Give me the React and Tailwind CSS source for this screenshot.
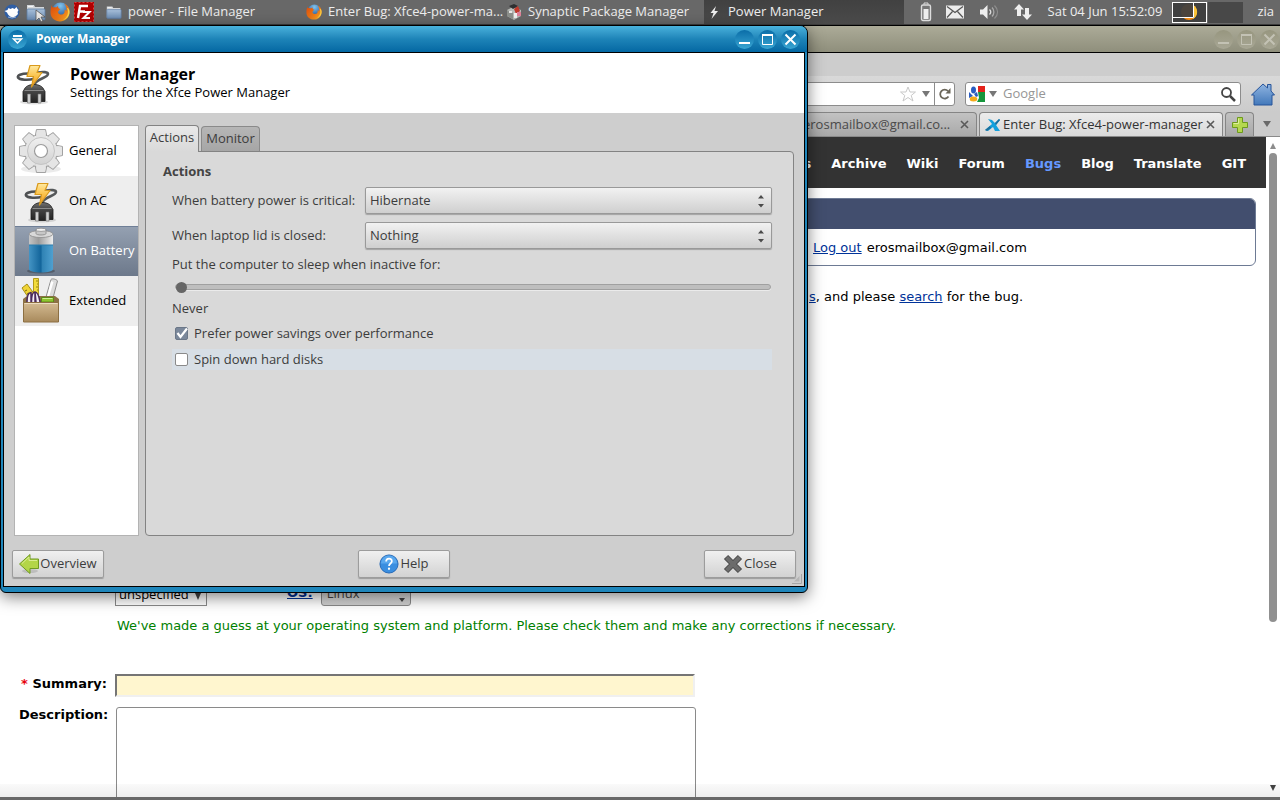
import { useState } from 'react';

const NAV_ITEMS = ['s', 'Archive', 'Wiki', 'Forum', 'Bugs', 'Blog', 'Translate', 'GIT'];

function XfceIcon() {
  return (
    <svg width="16" height="18" viewBox="0 0 16 18">
      <circle cx="8" cy="9" r="7.5" fill="#2f5fa6" />
      <path d="M.5 8l3-1 1-2 2 1 2-1 2 1 2-2 1 2 1 1-1 2 .5 2-2 2-3 1.500-3-1-2-2-1-2z" fill="#fff" />
      <path d="M4 14l4 1 4-1" stroke="#9db8dd" fill="none" />
    </svg>
  );
}

function FolderIcon({ size, cursor }) {
  return (
    <svg width={size} height={size} viewBox="0 0 20 20">
      <defs>
        <linearGradient id="folder" x1="0" y1="0" x2="0" y2="1">
          <stop offset="0" stopColor="#a9c0da" />
          <stop offset="1" stopColor="#6c8db4" />
        </linearGradient>
      </defs>
      <path d="M1 3h7l1 2h9v12H1z" fill="#d3d7db" />
      <path d="M2 4h5v1H2z" fill="#f5f5f5" />
      <rect x="1" y="7" width="18" height="11" rx="1" fill="url(#folder)" stroke="#5d7da5" strokeWidth="0.8" />
      {cursor && <path d="M10 8v11l3-3 2 4 2-1-2-4h4z" fill="#e8e8e8" stroke="#555" strokeWidth="0.8" />}
    </svg>
  );
}

function FirefoxIcon({ size }) {
  return (
    <svg width={size} height={size} viewBox="0 0 20 20" className="shrink-0">
      <defs>
        <radialGradient id="globe" cx="0.5" cy="0.2" r="0.8">
          <stop offset="0" stopColor="#7fc4ee" />
          <stop offset="1" stopColor="#173f86" />
        </radialGradient>
        <linearGradient id="fox" x1="0" y1="0" x2="1" y2="1">
          <stop offset="0" stopColor="#d9480c" />
          <stop offset="0.6" stopColor="#ee7b16" />
          <stop offset="1" stopColor="#f9b52a" />
        </linearGradient>
      </defs>
      <circle cx="10.500" cy="9" r="8.500" fill="url(#globe)" />
      <path d="M2 3c0 1 0 2 .5 2.500C3.500 5 5 5 6 5.500L8 4c0 2 1 3 2.500 3L8.500 9c-1 1 0 3.500 2.500 3.500 3 0 4-2 3.500-5 1 .5 1.500 1 1.800 2C17 6 16 3 14 1.500c4 1.500 6 5 5.500 9C19 16 15 19.500 10 19.500S.5 16 .5 10.500C.5 7 1 5 2 3z" fill="url(#fox)" />
      <path d="M17 6c2 4 1 9-4 12 4-1 6.500-4 6.500-8 0-2-1-4-2.500-4z" fill="#fbd044" />
    </svg>
  );
}

function FileZillaIcon() {
  return (
    <svg width="20" height="20" viewBox="0 0 20 20">
      <rect width="20" height="20" fill="#b00000" />
      <rect x="0.5" y="0.5" width="19" height="19" fill="none" stroke="#e04040" strokeDasharray="2 2" />
      <path d="M4 16L6 4h8M5 9.500h6" stroke="#fff" strokeWidth="2.400" fill="none" />
      <path d="M9 10h6.500l-6 6H16" stroke="#fff" strokeWidth="2" fill="none" />
    </svg>
  );
}

function SynapticIcon() {
  return (
    <svg width="16" height="16" viewBox="0 0 16 16" className="shrink-0">
      <path d="M1 6l6-3 8 3v6l-7 4-7-4z" fill="#b9bcb8" />
      <path d="M1 6l6 3v6l-6-3z" fill="#8d908c" />
      <path d="M3 2l5-2 4 2-5 3z" fill="#2d2f30" />
      <path d="M8 5l4-3 2 5-4 3z" fill="#c23a2c" />
      <path d="M11 8h4v4h-4z" fill="#e0829a" />
      <path d="M8 9h3v5H8z" fill="#f2f2f2" />
      <path d="M3 7h3v2H3z" fill="#e8e8e8" />
    </svg>
  );
}

function PlugIcon() {
  return (
    <svg width="40" height="44" viewBox="0 0 40 44">
      <defs>
        <linearGradient id="bolt" x1="0" y1="0" x2="0" y2="1">
          <stop offset="0" stopColor="#ffe9a0" />
          <stop offset="0.5" stopColor="#fbc24a" />
          <stop offset="1" stopColor="#ee9324" />
        </linearGradient>
        <linearGradient id="plug" x1="0" y1="0" x2="0" y2="1">
          <stop offset="0" stopColor="#707070" />
          <stop offset="0.350" stopColor="#474747" />
          <stop offset="1" stopColor="#222222" />
        </linearGradient>
      </defs>
      <ellipse cx="21" cy="41" rx="14" ry="2.500" fill="#000" opacity="0.120" />
      <path d="M15 12.500C8 12.500 4 14.500 5 16.500c1.500 2.500 10 3 17 1" fill="none" stroke="#4e5052" strokeWidth="2.600" />
      <path d="M25 11.500c5-1 10-.5 10 1.500 0 4-12 4.500-14 11" fill="none" stroke="#55585a" strokeWidth="2.600" />
      <path d="M11 29c1-3.500 5-5.500 10-5.500s9 2 10 5.500l1 1.500v10h-4l-2 1H16l-2-1h-4v-10z" fill="url(#plug)" stroke="#1c1c1c" strokeWidth="0.800" />
      <path d="M11.500 29.500h19" stroke="#8a8a8a" />
      <path d="M14.500 33h3v9h-3zM25 33h3v9h-3z" fill="#cfd0d0" stroke="#777" strokeWidth="0.600" />
      <path d="M17 4.500h10l-3 7h5L18.500 26l2-10.500H14z" fill="url(#bolt)" stroke="#d99a1c" strokeWidth="1.200" strokeLinejoin="round" />
    </svg>
  );
}

function GearIcon() {
  const teeth = [0, 45, 90, 135, 180, 225, 270, 315];
  return (
    <svg width="48" height="48" viewBox="0 0 48 48">
      <defs>
        <linearGradient id="gear" x1="0" y1="0" x2="0" y2="1">
          <stop offset="0" stopColor="#f0f0f0" />
          <stop offset="1" stopColor="#d2d2d2" />
        </linearGradient>
      </defs>
      <ellipse cx="24" cy="42" rx="20" ry="4" fill="#000" opacity="0.080" />
      <g fill="#e3e3e3" stroke="#a2a2a2" strokeLinejoin="round">
        {teeth.map(angle => (
          <path key={angle} d="M18 10l1.500-7.500h9L30 10z" transform={`rotate(${angle} 24 24)`} />
        ))}
      </g>
      <circle cx="24" cy="24" r="16.500" fill="url(#gear)" stroke="#a2a2a2" />
      <g fill="#e5e5e5">
        {teeth.map(angle => (
          <path key={angle} d="M18.700 11l1.400-8h7.800l1.400 8z" transform={`rotate(${angle} 24 24)`} />
        ))}
      </g>
      <circle cx="24" cy="24" r="13.500" fill="url(#gear)" stroke="#c4c4c4" />
      <circle cx="24" cy="24" r="6.500" fill="#fff" stroke="#9b9b9b" strokeWidth="1.200" />
    </svg>
  );
}

function BatteryIcon() {
  return (
    <svg width="48" height="48" viewBox="0 0 48 48">
      <defs>
        <linearGradient id="cell">
          <stop offset="0" stopColor="#4494c4" />
          <stop offset="0.500" stopColor="#12649a" />
          <stop offset="0.550" stopColor="#2f82b4" />
          <stop offset="1" stopColor="#4fa0d0" />
        </linearGradient>
        <linearGradient id="metal">
          <stop offset="0" stopColor="#c5c5c5" />
          <stop offset="0.400" stopColor="#9c9c9c" />
          <stop offset="1" stopColor="#ededed" />
        </linearGradient>
      </defs>
      <ellipse cx="24" cy="44" rx="14" ry="2.500" fill="#000" opacity="0.250" />
      <path d="M12 8v34c0 2 5 3.500 12 3.500S36 44 36 42V8z" fill="url(#cell)" />
      <path d="M12 7v11h24V7z" fill="url(#metal)" />
      <path d="M12 18h24" stroke="#2d7dac" />
      <ellipse cx="24" cy="7" rx="12" ry="3.500" fill="#d9d9d9" stroke="#8d8d8d" strokeWidth="0.800" />
      <path d="M19 2.500v4c0 2 10 2 10 0v-4z" fill="#c7c7c7" stroke="#858585" strokeWidth="0.800" />
      <ellipse cx="24" cy="2.800" rx="5" ry="1.600" fill="#f2f2f2" stroke="#8d8d8d" strokeWidth="0.800" />
    </svg>
  );
}

function ToolboxIcon() {
  return (
    <svg width="48" height="48" viewBox="0 0 48 48">
      <defs>
        <linearGradient id="box" x1="0" y1="0" x2="0" y2="1">
          <stop offset="0" stopColor="#d4bb92" />
          <stop offset="1" stopColor="#a88a5c" />
        </linearGradient>
      </defs>
      <path d="M5 11l5-4 8 11-5 5z" fill="#f0d436" stroke="#a88f14" />
      <path d="M8 14l2-1M10 17l2-1" stroke="#7d6b0f" />
      <path d="M16.500 1.500h5v20h-5z" fill="#f2dc3c" stroke="#b39a1c" />
      <path d="M19 4h2M20 7h1M19 10h2M20 13h1" stroke="#7d6b0f" strokeWidth="0.800" />
      <path d="M34 2.500c1-1.500 6 0 6.500 1.500L36 21l-7-1z" fill="#dcdcdc" stroke="#8d8d8d" />
      <path d="M34 4l2.500 1L32 20l-2-.5z" fill="#fff" />
      <path d="M6 22l4-3h28l4 3v4H6z" fill="#8c7146" />
      <path d="M10 25c0-7 2-9.500 4-9.500V25M14.500 25c0-7 1-10 3.500-10v10M19 25l-1-10c3 0 4 4 5 10" fill="#f5eef8" stroke="#4b2a5b" strokeWidth="1.500" />
      <path d="M24.500 20.500h12V25h-12z" fill="#8fc52f" stroke="#5c8a17" />
      <path d="M25.500 21.500h10" stroke="#d0ef90" />
      <path d="M6.500 25.500h35v19.500h-35z" fill="url(#box)" stroke="#8c6f42" />
      <path d="M7.500 26.500h33" stroke="#ecdcc0" />
    </svg>
  );
}

function BoltIcon() {
  return (
    <svg width="16" height="16" viewBox="0 0 16 16" className="shrink-0">
      <path d="M10 2L4.500 9h3L5.500 15l6.500-8H8.500z" fill="#eee" />
    </svg>
  );
}

function TrayIcons() {
  return (
    <div className="flex items-center">
      <svg width="12" height="20" viewBox="0 0 12 20">
        <path d="M4 2.500V1h4v1.500" fill="none" stroke="#ddd" />
        <rect x="1.500" y="3" width="9" height="15.500" rx="1.500" fill="#777" stroke="#ddd" strokeWidth="1.400" />
        <rect x="3.500" y="7" width="5" height="10" fill="#eee" />
      </svg>
      <svg className="ml-[14px]" width="18" height="14" viewBox="0 0 18 14">
        <rect width="18" height="13" y="0.500" fill="#ececec" />
        <path d="M1 1.500l8 6 8-6M1 12.500l5.500-6M17 12.500l-5.500-6" fill="none" stroke="#555" strokeWidth="1.200" />
      </svg>
      <svg className="ml-[16px]" width="19" height="16" viewBox="0 0 19 16">
        <path d="M0 5.500h3L7.500 1v14L3 10.500H0z" fill="#eee" />
        <path d="M9.500 5.500c1.500 1.500 1.500 3.500 0 5" stroke="#ddd" fill="none" strokeWidth="1.300" />
        <path d="M12 3.500c2.500 2.500 2.500 6.500 0 9" stroke="#aaa" fill="none" strokeWidth="1.300" />
        <path d="M14.500 1.500c4 4 4 9 0 13" stroke="#8d8d8d" fill="none" strokeWidth="1.300" />
      </svg>
      <svg className="ml-[15px]" width="18" height="16" viewBox="0 0 18 16">
        <path d="M5 0l5 5.500H7V12H3V5.500H0z" fill="#eee" />
        <path d="M13 16l5-5.500h-3V4h-4v6.500H8z" fill="#eee" />
      </svg>
    </div>
  );
}

function Task({ icon, children, active }) {
  return (
    <button
      className={`flex w-[200px] items-center gap-[6px] pl-[2px] text-left ${active ? 'bg-gradient-to-b from-[#414141] to-[#4a4a4a]' : ''}`}
    >
      <span className="flex w-4 shrink-0 justify-center">{icon}</span>
      <span className="whitespace-nowrap">{children}</span>
    </button>
  );
}

function TopPanel() {
  return (
    <header className="flex h-[25px] shrink-0 border-b border-[#3c3c3c] bg-[#686868] font-['Open_Sans','Noto_Sans',sans-serif] text-[13px] text-[#eeeeee]">
      <div className="flex w-[104px] items-center pl-1">
        <button aria-label="Applications"><XfceIcon /></button>
        <button aria-label="Files" className="ml-[6px]"><FolderIcon size={20} cursor /></button>
        <button aria-label="Firefox" className="ml-1"><FirefoxIcon size={20} /></button>
        <button aria-label="FileZilla" className="ml-1"><FileZillaIcon /></button>
      </div>
      <nav className="flex">
        <Task icon={<FolderIcon size={16} />}>power - File Manager</Task>
        <Task icon={<FirefoxIcon size={16} />}>Enter Bug: Xfce4-power-ma...</Task>
        <Task icon={<SynapticIcon />}>Synaptic Package Manager</Task>
        <Task icon={<BoltIcon />} active>Power Manager</Task>
      </nav>
      <div className="ml-auto flex items-center pr-[6px]">
        <TrayIcons />
        <span className="ml-4 whitespace-nowrap">Sat 04 Jun 15:52:09</span>
        <div className="ml-[10px] flex gap-px">
          <div className="h-[21px] w-[35px] border border-white bg-[#404040]">
            <svg width="33" height="19" viewBox="0 0 33 19">
              <circle cx="16" cy="9" r="8" fill="#f28a14" />
              <path d="M20 2a8 8 0 0 1 0 14z" fill="#fbc437" />
              <rect width="21" height="15" fill="#404040" fillOpacity="0.94" />
              <path d="M0 14.500h20.500V0" fill="none" stroke="#fff" />
            </svg>
          </div>
          <div className="h-[21px] w-[35px] bg-[#484848]" />
        </div>
        <span className="ml-[14px]">zia</span>
      </div>
    </header>
  );
}

function WindowButtons({ muted }) {
  const circle = muted ? 'url(#knob-muted)' : 'url(#knob)';
  const stroke = muted ? '#c3c2b4' : '#ffffff';
  return (
    <div className="flex gap-1">
      <button aria-label="Minimize">
        <svg width="19" height="19" viewBox="0 0 19 19">
          <defs>
            <linearGradient id="knob" x1="0" y1="0" x2="0" y2="1">
              <stop offset="0" stopColor="#0a6da8" />
              <stop offset="1" stopColor="#39a5d2" />
            </linearGradient>
            <linearGradient id="knob-muted" x1="0" y1="0" x2="0" y2="1">
              <stop offset="0" stopColor="#97967f" />
              <stop offset="1" stopColor="#a8a795" />
            </linearGradient>
          </defs>
          <circle cx="9.500" cy="9.500" r="9.500" fill={circle} />
          <path d="M4 13h11" stroke={stroke} strokeWidth="2" />
        </svg>
      </button>
      <button aria-label="Maximize">
        <svg width="19" height="19" viewBox="0 0 19 19">
          <circle cx="9.500" cy="9.500" r="9.500" fill={circle} />
          <path d="M4.500 5v9.500h10V5" stroke={stroke} fill="none" />
          <path d="M4 5h11" stroke={stroke} strokeWidth="2" />
        </svg>
      </button>
      <button aria-label="Close window">
        <svg width="19" height="19" viewBox="0 0 19 19">
          <circle cx="9.500" cy="9.500" r="9.500" fill={circle} />
          <path d="M4.500 4.500l10 10M14.500 4.500l-10 10" stroke={stroke} strokeWidth="2" />
        </svg>
      </button>
    </div>
  );
}

function Browser() {
  return (
    <section className="flex min-h-0 flex-1 flex-col bg-white">
      <div className="flex h-7 shrink-0 items-center justify-end border-y border-black bg-gradient-to-b from-[#acab98] to-[#8f8f7c] pr-px">
        <WindowButtons muted />
      </div>
      <div className="h-[23px] shrink-0 bg-[#cdcdcd]" />
      <div className="flex h-9 shrink-0 items-center justify-end bg-gradient-to-b from-[#d9d9d9] to-[#cbcbcb] pr-[5px] font-['Open_Sans','Noto_Sans',sans-serif] text-[13px]">
        <div className="flex h-6 flex-1 items-center justify-end rounded-[3px] border border-[#8c8c8c] bg-white">
          <svg width="16" height="16" viewBox="0 0 16 16">
            <path d="M8 1l2 5h5.500l-4.300 3.500L13 15l-5-3.500L3 15l1.800-5.500L.5 6H6z" fill="#fff" stroke="#c9c9c9" />
          </svg>
          <svg className="ml-[6px]" width="8" height="6" viewBox="0 0 8 6"><path d="M0 0h8L4 6z" fill="#777" /></svg>
          <button aria-label="Reload" className="ml-1 flex h-full w-5 items-center justify-center border-l border-[#8c8c8c]">
            <svg width="12" height="12" viewBox="0 0 12 12">
              <path d="M9.500 8.500A4.500 4.500 0 1 1 9 3" fill="none" stroke="#6b6659" strokeWidth="1.800" />
              <path d="M11.500 0v5.500H6.500z" fill="#6b6659" />
            </svg>
          </button>
        </div>
        <div className="ml-[10px] flex h-6 w-[276px] items-center rounded-[3px] border border-[#8c8c8c] bg-white pr-1 pl-[3px]">
          <svg width="16" height="16" viewBox="0 0 16 16" className="shrink-0">
            <path d="M9 0h7v6H9z" fill="#e4231b" />
            <path d="M9 6h7v10H8l2-4z" fill="#16963c" />
            <path d="M0 6l4 4-4 2z" fill="#2a5cc0" />
            <ellipse cx="4.500" cy="4" rx="2.500" ry="3.500" fill="#2a5cc0" />
            <ellipse cx="4.500" cy="13" rx="3.800" ry="2.500" fill="#f4ab1a" />
            <path d="M5 8l3-2 1 4-2 1z" fill="#2a5cc0" />
          </svg>
          <svg className="ml-1 shrink-0" width="8" height="6" viewBox="0 0 8 6"><path d="M0 0h8L4 6z" fill="#777" /></svg>
          <input aria-label="Search" placeholder="Google" className="ml-[6px] min-w-0 flex-1 outline-none placeholder:text-[#969696]" />
          <svg width="15" height="15" viewBox="0 0 15 15">
            <circle cx="5.500" cy="5.500" r="4.500" fill="none" stroke="#444" strokeWidth="1.800" />
            <path d="M9 9l5 5" stroke="#444" strokeWidth="2.500" />
          </svg>
        </div>
        <button aria-label="Home" className="ml-[10px]">
          <svg width="24" height="23" viewBox="0 0 24 23">
            <defs>
              <linearGradient id="home" x1="0" y1="0" x2="0" y2="1">
                <stop offset="0" stopColor="#8fb4e0" />
                <stop offset="1" stopColor="#4278ba" />
              </linearGradient>
            </defs>
            <path d="M12 1L.5 12H3v10h18V12h2.500L20 8V1.500h-3.500V5z" fill="url(#home)" stroke="#27549a" />
          </svg>
        </button>
      </div>
      <div className="flex h-[25px] shrink-0 items-end justify-end border-b border-[#8a8a8a] bg-[#cbcbcb] font-['Open_Sans','Noto_Sans',sans-serif] text-[13px] text-[#333333]">
        <div className="flex h-6 items-center rounded-t border border-b-0 border-[#858585] bg-gradient-to-b from-[#c2c2c2] to-[#a9a9a9] pr-[6px] text-[#4a4a4a]">
          <span className="w-[155px] whitespace-nowrap">erosmailbox@gmail.co...</span>
          <TabClose />
        </div>
        <div className="ml-[2px] flex h-6 w-[244px] items-center rounded-t border border-b-0 border-[#858585] bg-gradient-to-b from-[#ececec] to-[#d9d9d9] pr-[6px] pl-[5px]">
          <svg width="16" height="14" viewBox="0 0 16 14" className="shrink-0">
            <path d="M0 12l7-6-4-5 4 1 3 3 4-4 1 1-4 5 4 6h-5L8 9l-5 4z" fill="#14a0dc" />
            <path d="M10 5l4-4 1 1-4 5zM0 12l5-4 1 2-4 3z" fill="#1d6f9c" />
          </svg>
          <span className="ml-[2px] flex-1 whitespace-nowrap">Enter Bug: Xfce4-power-manager</span>
          <TabClose />
        </div>
        <button aria-label="New tab" className="ml-[2px] flex h-6 w-[29px] items-center justify-center rounded-t border border-b-0 border-[#858585] bg-gradient-to-b from-[#c2c2c2] to-[#a9a9a9]">
          <svg width="16" height="16" viewBox="0 0 16 16">
            <path d="M5.500.5h5v5h5v5h-5v5h-5v-5h-5v-5h5z" fill="#b5d84e" stroke="#6d9a1c" />
            <path d="M6.500 1.500v5h-5" stroke="#dff09c" fill="none" />
          </svg>
        </button>
        <button aria-label="All tabs" className="flex h-6 w-[26px] items-center justify-center">
          <svg width="8" height="6" viewBox="0 0 8 6"><path d="M0 0h8L4 6z" fill="#6a6a6a" /></svg>
        </button>
      </div>
      <div className="relative flex min-h-0 flex-1 border-b-[3px] border-[#686868]">
        <BugPage />
        <div className="flex w-[14px] shrink-0 flex-col items-center py-[6px]">
          <svg width="6" height="6" viewBox="0 0 6 6"><path d="M3 0l3 6H0z" fill="#8c8c8c" /></svg>
          <div className="mt-1 w-2 flex-[470] rounded-full bg-[#909090]" />
          <div className="flex-[164]" />
          <svg width="6" height="6" viewBox="0 0 6 6"><path d="M0 0h6L3 6z" fill="#444" /></svg>
        </div>
        <div className="pointer-events-none absolute inset-x-0 bottom-0 h-[13px] bg-gradient-to-b from-black/2 to-black/7" />
      </div>
    </section>
  );
}

function TabClose() {
  return (
    <button aria-label="Close tab" className="flex w-3 justify-center">
      <svg width="9" height="9" viewBox="0 0 9 9"><path d="M1 1l7 7M8 1L1 8" stroke="#5a5a5a" strokeWidth="1.600" /></svg>
    </button>
  );
}

function BugPage() {
  return (
    <main className="min-w-0 flex-1 overflow-hidden font-['DejaVu_Sans',sans-serif] text-[13px] text-black">
      <nav className="flex h-[51px] items-center justify-end gap-5 bg-[#333333] pt-[2px] pr-5 font-bold text-white">
        {NAV_ITEMS.map(item => (
          <a key={item} href="#" className={item === 'Bugs' ? 'text-[#6699ff]' : ''}>{item}</a>
        ))}
      </nav>
      <div className="mx-[10px] mt-[10px] overflow-hidden rounded-md border border-[#6d7a94]">
        <div className="h-[30px] bg-[#424e6e]" />
        <p className="flex h-9 items-center gap-[5px] pt-[2px] pl-[802px] whitespace-nowrap">
          <a href="#" className="text-[#003399] underline">Log out</a> erosmailbox@gmail.com
        </p>
      </div>
      <p className="mt-[21px] pl-[809px] leading-5 whitespace-nowrap">
        <a href="#" className="text-[#003399] underline">s</a>, and please <a href="#" className="text-[#003399] underline">search</a> for the bug.
      </p>
      <form className="mt-[277px] pl-[19px]">
        <div className="flex h-[22px] items-end pl-24">
          <div className="relative">
            <select aria-label="Version" className="block h-[22px] w-[92px] appearance-none border border-[#8a8a8a] bg-white pl-[3px] font-['Open_Sans','Noto_Sans',sans-serif] text-[13px]">
              <option>unspecified</option>
            </select>
            <svg className="pointer-events-none absolute right-[6px] bottom-[6px]" width="6" height="7" viewBox="0 0 6 7"><path d="M0 0h6L3 7z" fill="#444" /></svg>
          </div>
          <label htmlFor="os" className="ml-20 pb-1 font-bold text-[#003399] underline">OS:</label>
          <div className="relative ml-2">
            <select id="os" className="block h-6 w-[90px] appearance-none rounded-[3px] border border-[#8a8a8a] bg-gradient-to-b from-[#ececec] to-[#cfcfcf] pl-[5px] font-['Open_Sans','Noto_Sans',sans-serif] text-[13px] text-[#444444]">
              <option>Linux</option>
            </select>
            <svg className="pointer-events-none absolute right-[6px] bottom-1" width="6" height="4" viewBox="0 0 6 4"><path d="M0 0h6L3 4z" fill="#444" /></svg>
          </div>
        </div>
        <p className="mt-[10px] pl-[98px] leading-5 text-[#008000]">
          We've made a guess at your operating system and platform. Please check them and make any corrections if necessary.
        </p>
        <div className="mt-[38px] flex">
          <label htmlFor="summary" className="w-24 pr-2 text-right leading-5 font-bold whitespace-nowrap">
            <span className="text-red-600">*</span> Summary:
          </label>
          <input id="summary" className="h-[23px] w-[580px] border-2 border-t-[#757575] border-r-[#f0f0f0] border-b-[#f0f0f0] border-l-[#757575] bg-[#fff6cf] outline-none" />
        </div>
        <div className="mt-[10px] flex items-start">
          <label htmlFor="description" className="w-24 pr-2 text-right leading-4 font-bold">Description:</label>
          <textarea id="description" rows="8" className="ml-px w-[580px] resize-none rounded-[3px] border border-[#8a8a8a] bg-white outline-none" />
        </div>
      </form>
    </main>
  );
}

function ComboBox({ id, label, value }) {
  return (
    <div className="flex items-center">
      <label htmlFor={id} className="w-[193px] shrink-0 whitespace-nowrap">{label}</label>
      <div className="relative flex-1">
        <select id={id} className="block h-[27px] w-full appearance-none rounded-[2px] border border-[#999999] bg-gradient-to-b from-[#f2f2f2] to-[#cfcfcf] pl-1 shadow-[0_1px_1px_rgba(0,0,0,0.25)]">
          <option>{value}</option>
        </select>
        <svg className="pointer-events-none absolute top-2 right-2" width="6" height="13" viewBox="0 0 6 13">
          <path d="M3 0l3 3.500H0zM0 9h6l-3 3.500z" fill="#4a4a4a" />
        </svg>
      </div>
    </div>
  );
}

function DialogButton({ icon, children }) {
  return (
    <button className="flex h-7 w-[92px] items-center justify-center gap-px rounded-[2px] border border-[#9c9c9c] bg-gradient-to-b from-[#f0f0f0] to-[#d2d2d2] shadow-[0_1px_1px_rgba(0,0,0,0.25)]">
      {icon}
      {children}
    </button>
  );
}

function Sidebar({ selected, onSelect }) {
  const items = [
    { name: 'General', icon: <GearIcon />, bg: 'bg-white' },
    { name: 'On AC', icon: <PlugIcon />, bg: 'bg-[#eeeeee]' },
    { name: 'On Battery', icon: <BatteryIcon />, bg: 'bg-white' },
    { name: 'Extended', icon: <ToolboxIcon />, bg: 'bg-[#eeeeee]' },
  ];
  return (
    <div className="w-[125px] shrink-0 border border-[#b3b3b3] bg-white">
      {items.map(item => (
        <button
          key={item.name}
          onClick={() => onSelect(item.name)}
          className={`flex h-[50px] w-full items-center pl-[2px] text-left ${
            item.name === selected
              ? 'bg-gradient-to-b from-[#95a1b2] to-[#6d798b] text-white shadow-[inset_0_1px_0_#6f7f97]'
              : `${item.bg} text-black`
          }`}
        >
          <span className="flex w-12 justify-center">{item.icon}</span>
          <span className="ml-1 whitespace-nowrap">{item.name}</span>
        </button>
      ))}
    </div>
  );
}

function CheckRow({ label, checked, highlighted }) {
  return (
    <label className={`mt-[5px] flex h-[21px] items-center gap-[6px] pl-[3px] ${highlighted ? 'bg-[#d7dee5]' : ''}`}>
      <input
        type="checkbox"
        defaultChecked={checked}
        className="peer h-[13px] w-[13px] appearance-none rounded-[2px] border border-[#8a8a8a] bg-white checked:border-[#6b7788] checked:bg-[#7b889b]"
      />
      <svg className="pointer-events-none -ml-[19px] hidden shrink-0 peer-checked:block" width="13" height="13" viewBox="0 0 13 13">
        <path d="M2.500 6l3 4L12 1.500" fill="none" stroke="#fff" strokeWidth="2.200" />
      </svg>
      {label}
    </label>
  );
}

function PowerManager() {
  const [section, setSection] = useState('On Battery');
  return (
    <section className="absolute top-0 left-0 w-[808px] rounded-t-lg rounded-b-md border border-black bg-[#1f86bb] px-[2px] pb-[5px] font-['Open_Sans','Noto_Sans',sans-serif] text-[13px] text-[#3c3c3c] shadow-[0_4px_16px_rgba(0,0,0,0.5)]">
      <div className="-mx-[2px] flex h-[26px] items-center rounded-t-[7px] bg-gradient-to-b from-[#49b2dc] via-[#1d84b8] via-50% to-[#0468a3] px-[7px]">
        <button aria-label="Window menu">
          <svg width="19" height="19" viewBox="0 0 19 19">
            <circle cx="9.500" cy="9.500" r="9.500" fill="url(#knob)" />
            <path d="M5 6h9" stroke="#fff" strokeWidth="2" />
            <path d="M5.500 9h8l-4 4z" fill="none" stroke="#fff" strokeWidth="1.500" />
          </svg>
        </button>
        <h1 className="ml-[9px] flex-1 text-[12px] font-bold text-white">Power Manager</h1>
        <WindowButtons />
      </div>
      <div className="border border-black bg-[#cecece]">
        <div className="flex h-[60px] items-center bg-white pl-[9px] text-black">
          <PlugIcon />
          <div className="ml-[17px] leading-[18px]">
            <h2 className="text-[16px] font-bold">Power Manager</h2>
            <p>Settings for the Xfce Power Manager</p>
          </div>
        </div>
        <div className="flex gap-[6px] px-[10px] pt-3">
          <Sidebar selected={section} onSelect={setSection} />
          <div className="flex min-w-0 flex-1 flex-col">
            <div className="flex items-end" role="tablist">
              <button role="tab" aria-selected="true" className="relative -mb-px h-[27px] w-[54px] rounded-t border border-b-0 border-[#838383] bg-gradient-to-b from-[#e9e9e9] to-[#d9d9d9] pb-[2px]">Actions</button>
              <button role="tab" aria-selected="false" className="ml-[2px] h-[25px] w-[59px] rounded-t border border-b-0 border-[#8a8a8a] bg-gradient-to-b from-[#b6b6b6] to-[#a6a6a6]">Monitor</button>
            </div>
            <div className="h-[385px] rounded-b rounded-tr border border-[#838383] bg-[#d9d9d9] pt-[9px] pr-[21px] pl-[17px]">
              <h3 className="leading-5 font-bold text-[#444444]">Actions</h3>
              <div className="mt-[6px] ml-[9px]">
                <ComboBox id="critical" label="When battery power is critical:" value="Hibernate" />
                <div className="mt-2">
                  <ComboBox id="lid" label="When laptop lid is closed:" value="Nothing" />
                </div>
                <label htmlFor="sleep" className="mt-[5px] block leading-5">Put the computer to sleep when inactive for:</label>
                <div className="mt-[10px] pr-px pl-[3px]">
                  <input
                    id="sleep"
                    type="range"
                    min="0"
                    max="360"
                    defaultValue="0"
                    className="block h-[6px] w-full appearance-none rounded-full border border-[#a0a0a0] bg-[#bebebe] shadow-[0_1px_0_#ebebeb] [&::-webkit-slider-thumb]:h-[11px] [&::-webkit-slider-thumb]:w-[11px] [&::-webkit-slider-thumb]:appearance-none [&::-webkit-slider-thumb]:rounded-full [&::-webkit-slider-thumb]:bg-[#666666]"
                  />
                </div>
                <p className="mt-2 leading-5">Never</p>
                <CheckRow label="Prefer power savings over performance" checked />
                <CheckRow label="Spin down hard disks" highlighted />
              </div>
            </div>
          </div>
        </div>
        <div className="flex justify-between px-2 pt-[14px] pb-2">
          <DialogButton
            icon={
              <svg width="20" height="20" viewBox="0 0 20 20">
                <ellipse cx="11" cy="17" rx="8" ry="2" fill="#000" opacity="0.120" />
                <path d="M.5 10L11 .5V5h8.500v9.500H11v5z" fill="#b3d548" stroke="#6f9a22" />
                <path d="M3 9.500L10 3v3.500h8" fill="none" stroke="#d9ec92" />
              </svg>
            }
          >
            Overview
          </DialogButton>
          <DialogButton
            icon={
              <svg width="20" height="20" viewBox="0 0 21 21">
                <circle cx="10.500" cy="10.500" r="9.500" fill="#3a8ee0" stroke="#2567b4" />
                <path d="M2 10a8.500 8.500 0 0 1 17 0z" fill="#5aa8ee" />
                <path d="M7.500 8c0-4 6-4 6-.5 0 2.500-3 2.500-3 5" fill="none" stroke="#fff" strokeWidth="1.800" />
                <circle cx="10.500" cy="15.500" r="1.200" fill="#fff" />
              </svg>
            }
          >
            Help
          </DialogButton>
          <div className="relative">
            <DialogButton
              icon={
                <svg width="20" height="20" viewBox="0 0 20 20">
                  <path d="M3 3l14 14M17 3L3 17" stroke="#4a4a4a" strokeWidth="6" />
                  <path d="M3.500 3.500l13 13M16.500 3.500l-13 13" stroke="#6c6c6c" strokeWidth="4" />
                </svg>
              }
            >
              <span>Close</span>
            </DialogButton>
            <svg className="absolute -right-[6px] -bottom-[6px]" width="10" height="10" viewBox="0 0 10 10">
              <path d="M9.500 0v9.500H0" fill="none" stroke="#a6a6a6" />
              <path d="M7.500 2v5.500H2z" fill="#b5b5b5" />
            </svg>
          </div>
        </div>
      </div>
    </section>
  );
}

export default function App() {
  return (
    <div className="flex h-screen flex-col overflow-hidden">
      <TopPanel />
      <div className="relative flex min-h-0 flex-1 flex-col">
        <Browser />
        <PowerManager />
      </div>
    </div>
  );
}
